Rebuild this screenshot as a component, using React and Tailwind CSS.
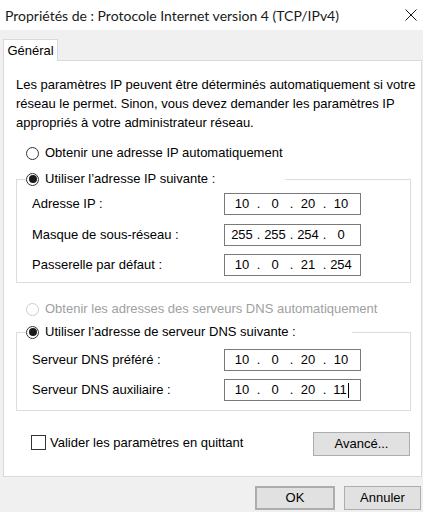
import React from 'react';

const ui = { fontFamily: '"Liberation Sans", Arial, sans-serif' };

const Radio = ({ checked, disabled }) => (
    <span
        className={`w-[13px] h-[13px] rounded-full border flex items-center justify-center shrink-0 bg-white ${disabled ? 'border-[#cccccc]' : 'border-[#333333]'}`}
    >
        {checked && <span className="w-[8px] h-[8px] rounded-full bg-[#1a1a1a]" />}
    </span>
);

const IpBox = ({ parts, caret }) => (
    <div className="w-[137px] h-[22px] border border-[#7a7a7a] bg-white flex items-center pl-[5px] text-[13px] text-black">
        {parts.map((p, i) => (
            <React.Fragment key={i}>
                {i > 0 && <span className="w-[9px] text-center">.</span>}
                <span className="w-[24px] flex justify-center items-center">
                    {p}
                    {caret && i === parts.length - 1 && <span className="w-px h-[15px] bg-black ml-px" />}
                </span>
            </React.Fragment>
        ))}
    </div>
);

const Row = ({ label, parts, caret, className = '' }) => (
    <div className={`flex items-center ${className}`}>
        <span className="w-[207px] pl-[15px]">{label}</span>
        <IpBox parts={parts} caret={caret} />
    </div>
);

const Button = ({ children, className = '' }) => (
    <button className={`h-[24px] bg-[#e1e1e1] border border-[#adadad] text-[13px] text-black ${className}`}>
        {children}
    </button>
);

const App = () => {
    return (
        <div className="w-[423px] h-[512px] bg-[#f0f0f0] overflow-hidden text-[13px] text-black" style={ui}>
            {/* title bar */}
            <div className="h-[30px] bg-white flex items-center justify-between pl-[5px] pr-[5px]">
                <span className="text-[14px] text-[#1a1a1a]" style={{ fontFamily: 'Lato, sans-serif' }}>
                    Propriétés de : Protocole Internet version 4 (TCP/IPv4)
                </span>
                <svg width="12" height="12" viewBox="0 0 12 12" className="mr-[1px]">
                    <path d="M0.5 0.5 L11.5 11.5 M11.5 0.5 L0.5 11.5" stroke="#111" strokeWidth="1" fill="none" />
                </svg>
            </div>

            {/* tab */}
            <div className="pt-[9px] pl-[3px]">
                <div className="relative z-10 -mb-px w-[55px] h-[22px] bg-white border border-b-0 border-[#d9d9d9] flex items-center justify-center">
                    Général
                </div>
            </div>

            {/* panel */}
            <div className="ml-[3px] w-[419px] h-[417px] bg-white border border-[#d9d9d9] pl-[12px] pt-[14px]">
                <p className="leading-[19px]">
                    Les paramètres IP peuvent être déterminés automatiquement si votre
                    <br />
                    réseau le permet. Sinon, vous devez demander les paramètres IP
                    <br />
                    appropriés à votre administrateur réseau.
                </p>

                <div className="mt-[11px] h-[20px] flex items-center pl-[10px] gap-[6px]">
                    <Radio />
                    <span>Obtenir une adresse IP automatiquement</span>
                </div>

                <fieldset className="mt-[6px] w-[395px] border border-[#dcdcdc] pb-[6px]">
                    <legend className="ml-[9px] w-[259px] h-[20px] flex items-center gap-[6px]">
                        <Radio checked />
                        <span>Utiliser l’adresse IP suivante :</span>
                    </legend>
                    <Row className="mt-[4px]" label="Adresse IP :" parts={['10', '0', '20', '10']} />
                    <Row className="mt-[9px]" label="Masque de sous-réseau :" parts={['255', '255', '254', '0']} />
                    <Row className="mt-[8px]" label="Passerelle par défaut :" parts={['10', '0', '21', '254']} />
                </fieldset>

                <div className="mt-[16px] h-[20px] flex items-center pl-[10px] gap-[6px] text-[#a0a0a0]">
                    <Radio disabled />
                    <span>Obtenir les adresses des serveurs DNS automatiquement</span>
                </div>

                <fieldset className="mt-[3px] w-[395px] border border-[#dcdcdc] pb-[9px]">
                    <legend className="ml-[9px] w-[326px] h-[20px] flex items-center gap-[6px]">
                        <Radio checked />
                        <span>Utiliser l’adresse de serveur DNS suivante :</span>
                    </legend>
                    <Row className="mt-[7px]" label="Serveur DNS préféré :" parts={['10', '0', '20', '10']} />
                    <Row className="mt-[8px]" label="Serveur DNS auxiliaire :" parts={['10', '0', '20', '11']} caret />
                </fieldset>

                <div className="mt-[21px] w-[395px] flex items-start justify-between">
                    <div className="flex items-center gap-[4px] pl-[15px] pt-[1px]">
                        <span className="w-[15px] h-[15px] border border-[#333333] bg-white" />
                        <span>Valider les paramètres en quittant</span>
                    </div>
                    <Button className="w-[97px] mr-[1px]">Avancé...</Button>
                </div>
            </div>

            {/* bottom buttons */}
            <div className="mt-[9px] flex justify-end gap-[9px] pr-[2px]">
                <Button className="w-[80px] border-2 border-[#0078d7]">OK</Button>
                <Button className="w-[77px]">Annuler</Button>
            </div>
        </div>
    );
};

export default App;
